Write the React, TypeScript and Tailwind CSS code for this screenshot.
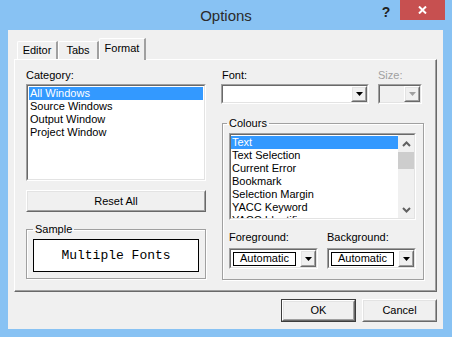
import React from "react";

function Raised({ className = "", innerClassName = "", children }: { className?: string; innerClassName?: string; children?: React.ReactNode }) {
  return (
    <div className={`border border-t-white border-l-white border-r-[#696969] border-b-[#696969] bg-[#f0f0f0] ${className}`}>
      <div className={`h-full w-full border border-t-[#e3e3e3] border-l-[#e3e3e3] border-r-[#a0a0a0] border-b-[#a0a0a0] ${innerClassName}`}>
        {children}
      </div>
    </div>
  );
}

function Sunken({ className = "", innerClassName = "", children }: { className?: string; innerClassName?: string; children?: React.ReactNode }) {
  return (
    <div className={`border border-t-[#a0a0a0] border-l-[#a0a0a0] border-r-white border-b-white ${className}`}>
      <div className={`h-full w-full border border-t-[#696969] border-l-[#696969] border-r-[#e3e3e3] border-b-[#e3e3e3] ${innerClassName}`}>
        {children}
      </div>
    </div>
  );
}

function DownTri({ color = "#000" }: { color?: string }) {
  return (
    <svg width="7" height="4" viewBox="0 0 7 4">
      <path d="M0 0 H7 L3.5 4 Z" fill={color} />
    </svg>
  );
}

function DropBtn({ disabled = false }: { disabled?: boolean }) {
  return (
    <Raised className="w-[16px] h-full shrink-0" innerClassName="flex items-center justify-center">
      <DownTri color={disabled ? "#a0a0a0" : "#000"} />
    </Raised>
  );
}

function ColourCombo() {
  return (
    <Sunken className="w-[89px] h-[21px] bg-white" innerClassName="flex items-stretch bg-white">
      <div className="flex-1 flex items-center pl-[2px] pr-[2px]">
        <div className="w-[63px] h-[14px] border border-black bg-white flex items-center justify-center leading-none">Automatic</div>
      </div>
      <DropBtn />
    </Sunken>
  );
}

function Tab({ label, selected = false, className = "" }: { label: string; selected?: boolean; className?: string }) {
  return (
    <div
      className={`relative flex items-center justify-center border-l border-t border-t-white border-l-white border-r-2 border-r-[#a0a0a0] bg-[#f0f0f0] ${
        selected ? "h-[22px] -mb-[1px] z-10 pb-[3px] rounded-tl-[2px]" : "h-[18px] rounded-tl-[2px]"
      } ${className}`}
    >
      {label}
    </div>
  );
}

export default function App() {
  const catItems = ["All Windows", "Source Windows", "Output Window", "Project Window"];
  const colItems = ["Text", "Text Selection", "Current Error", "Bookmark", "Selection Margin", "YACC Keyword", "YACC Identifier"];
  return (
    <div className="w-[452px] h-[337px] bg-[#88c2f3] flex flex-col font-['Liberation_Sans',Arial,sans-serif] text-[11px] leading-[13px] text-black overflow-hidden">
      {/* Title bar */}
      <div className="h-[30px] flex items-start shrink-0">
        <div className="w-[78px]" />
        <div className="flex-1 h-[30px] flex items-center justify-center text-[15px] text-[#2b2b2b]">Options</div>
        <div className="w-[78px] flex items-start pr-[7px]">
          <div className="w-[24px] h-[20px] flex items-center justify-center text-[14px] font-bold text-[#222] pt-[4px]">?</div>
          <div className="ml-[2px] w-[45px] h-[20px] bg-[#c75050] flex items-center justify-center">
            <svg width="9" height="8" viewBox="0 0 9 8">
              <path d="M1 0.5 L8 7.5 M8 0.5 L1 7.5" stroke="#fff" strokeWidth="2" />
            </svg>
          </div>
        </div>
      </div>

      {/* Client area */}
      <div className="ml-[8px] w-[435px] h-[299px] bg-[#f0f0f0] flex flex-col px-[6px] pt-[8px] shrink-0">
        {/* Tabs */}
        <div className="h-[21px] flex items-end pl-[3px] shrink-0">
          <Tab label="Editor" className="w-[41px]" />
          <Tab label="Tabs" className="w-[41px]" />
          <Tab label="Format" selected className="w-[47px]" />
        </div>

        {/* Panel */}
        <div className="h-[233px] border border-t-white border-l-white border-r-[#696969] border-b-[#696969] shrink-0">
          <div className="h-full w-full border-r border-b border-r-[#a0a0a0] border-b-[#a0a0a0] flex pl-[11px] pt-[9px]">
            {/* Left column */}
            <div className="w-[180px] flex flex-col shrink-0">
              <div className="h-[13px]">Category:</div>
              <Sunken className="mt-[2px] h-[97px] bg-white" innerClassName="bg-white pt-[1px] px-[1px]">
                {catItems.map((t, i) => (
                  <div key={t} className={`h-[13px] pl-[1px] ${i === 0 ? "bg-[#3399ff] text-white" : ""}`}>{t}</div>
                ))}
              </Sunken>
              <Raised className="mt-[9px] h-[22px]" innerClassName="flex items-center justify-center">Reset All</Raised>
              <fieldset className="mt-[11px] h-[56px] border border-[#a0a0a0] shadow-[1px_1px_0_#fff,inset_1px_1px_0_#fff] px-[6px] pb-[7px]">
                <legend className="px-[2px] h-[13px]">Sample</legend>
                <div className="mt-[3px] h-[33px] border border-black bg-white flex items-center justify-center font-['Liberation_Mono','Courier_New',monospace] text-[13px]">
                  Multiple Fonts
                </div>
              </fieldset>
            </div>

            {/* Right column */}
            <div className="ml-[15px] w-[202px] flex flex-col shrink-0">
              <div className="h-[13px] flex">
                <div className="w-[157px] pl-[1px]">Font:</div>
                <div className="text-[#a0a0a0]">Size:</div>
              </div>
              <div className="mt-[2px] h-[20px] flex">
                <Sunken className="w-[148px] h-[20px] bg-white" innerClassName="bg-white flex justify-end">
                  <DropBtn />
                </Sunken>
                <Sunken className="ml-[9px] w-[44px] h-[20px]" innerClassName="bg-[#f0f0f0] flex justify-end">
                  <DropBtn disabled />
                </Sunken>
              </div>
              <fieldset className="ml-[1px] mt-[13px] w-[201px] border border-[#a0a0a0] shadow-[1px_1px_0_#fff,inset_1px_1px_0_#fff] pl-[6px] pr-[7px] pb-[10px]">
                <legend className="px-[2px] -ml-[2px] h-[13px]">Colours</legend>
                <Sunken className="mt-[3px] h-[87px] bg-white" innerClassName="bg-white flex overflow-hidden">
                  <div className="flex-1 overflow-hidden pt-[1px]">
                    {colItems.map((t, i) => (
                      <div key={t} className={`h-[13px] pl-[1px] whitespace-nowrap ${i === 0 ? "bg-[#3399ff] text-white" : ""}`}>{t}</div>
                    ))}
                  </div>
                  <div className="w-[16px] bg-[#f0f0f0] flex flex-col shrink-0">
                    <div className="h-[17px] flex items-center justify-center">
                      <svg width="9" height="6" viewBox="0 0 9 6">
                        <path d="M1 5 L4.5 1.5 L8 5" stroke="#606060" strokeWidth="2" fill="none" />
                      </svg>
                    </div>
                    <div className="h-[17px] bg-[#cdcdcd]" />
                    <div className="flex-1" />
                    <div className="h-[17px] flex items-center justify-center">
                      <svg width="9" height="6" viewBox="0 0 9 6">
                        <path d="M1 1 L4.5 4.5 L8 1" stroke="#606060" strokeWidth="2" fill="none" />
                      </svg>
                    </div>
                  </div>
                </Sunken>
                <div className="mt-[11px] h-[13px] flex">
                  <div className="w-[98px]">Foreground:</div>
                  <div>Background:</div>
                </div>
                <div className="mt-[4px] flex">
                  <ColourCombo />
                  <div className="ml-[9px]">
                    <ColourCombo />
                  </div>
                </div>
              </fieldset>
            </div>
          </div>
        </div>

        {/* Buttons */}
        <div className="mt-[7px] flex justify-end gap-[6px]">
          <div className="border border-[#3c3c3c]">
            <Raised className="w-[73px] h-[21px]" innerClassName="flex items-center justify-center">OK</Raised>
          </div>
          <Raised className="w-[75px] h-[23px]" innerClassName="flex items-center justify-center">Cancel</Raised>
        </div>
      </div>
    </div>
  );
}
